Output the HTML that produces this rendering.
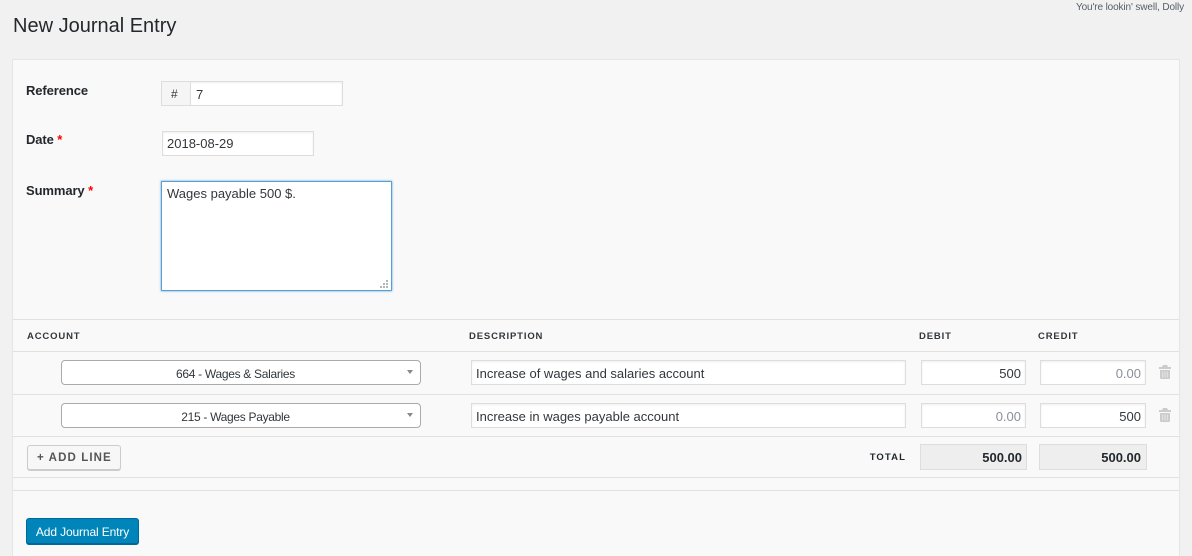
<!DOCTYPE html>
<html><head><meta charset="utf-8">
<style>
html,body{margin:0;padding:0;width:1192px;height:556px;overflow:hidden;background:#f1f1f1;font-family:"Liberation Sans",sans-serif;color:#32373c}
.a{position:absolute;box-sizing:border-box;white-space:nowrap}
.t{position:absolute;white-space:nowrap;font-size:13px;line-height:18px;color:#32373c}
.b{font-weight:bold;color:#23282d;font-size:13px;letter-spacing:-.1px}
.h{font-weight:bold;font-size:9.5px;letter-spacing:.85px;color:#32373c;line-height:12px}
.i{position:absolute;box-sizing:border-box;background:#fff;border:1px solid #ddd;box-shadow:inset 0 1px 2px rgba(0,0,0,.07)}
.l{position:absolute;left:13px;width:1166px;height:1px;background:#e1e1e1}
.s{position:absolute;box-sizing:border-box;background:#fff;border:1px solid #aaa;border-radius:4px;left:61px;width:360px;height:25px}
.c{position:absolute;width:0;height:0;border-left:3.500px solid transparent;border-right:3.500px solid transparent;border-top:4px solid #888;left:407px}
.r{text-align:right}
.tot{position:absolute;box-sizing:border-box;background:#eee;border:1px solid #ddd;top:444px;height:26px}
</style></head><body>
<div class="t" style="left:13px;top:13px;font-size:20px;line-height:26px;color:#23282d">New Journal Entry</div>
<div class="t" style="right:8px;top:1px;font-size:10px;line-height:14px;letter-spacing:-.12px;color:#555d66">You're lookin' swell, Dolly</div>

<div class="a" style="left:12px;top:59px;width:1168px;height:497px;background:#f9f9f9;border:1px solid #e5e5e5;border-bottom:0"></div>

<div class="t b" style="left:26px;top:82px">Reference</div>
<div class="i" style="left:161px;top:81px;width:182px;height:25px"></div>
<div class="a" style="left:161px;top:81px;width:30px;height:25px;background:#f5f5f5;border:1px solid #ddd"></div>
<div class="t" style="left:171px;top:85px;font-size:12px">#</div>
<div class="t" style="left:196px;top:86px">7</div>

<div class="t b" style="left:26px;top:131px">Date <span style="color:#f00">*</span></div>
<div class="i" style="left:162px;top:131px;width:152px;height:25px"></div>
<div class="t" style="left:167px;top:135px">2018-08-29</div>

<div class="t b" style="left:26px;top:182px">Summary <span style="color:#f00">*</span></div>
<div class="i" style="left:161px;top:181px;width:231px;height:110px;border-color:#5b9dd9;box-shadow:0 0 2px rgba(30,140,190,.8)"></div>
<div class="t" style="left:167px;top:185px">Wages payable 500 $.</div>
<svg class="a" style="left:380px;top:280px" width="9" height="9" fill="#b5b5b5"><rect x="6" y="0" width="2" height="2"/><rect x="3" y="3" width="2" height="2"/><rect x="6" y="3" width="2" height="2"/><rect x="0" y="6" width="2" height="2"/><rect x="3" y="6" width="2" height="2"/><rect x="6" y="6" width="2" height="2"/></svg>

<div class="l" style="top:319px"></div>
<div class="t h" style="left:27px;top:331px">ACCOUNT</div>
<div class="t h" style="left:469px;top:331px">DESCRIPTION</div>
<div class="t h" style="left:919px;top:331px">DEBIT</div>
<div class="t h" style="left:1038px;top:331px">CREDIT</div>
<div class="l" style="top:351px"></div>

<div class="s" style="top:360px"></div>
<div class="t" style="left:61px;width:349px;text-align:center;top:365px;font-size:12px;letter-spacing:-.3px">664 - Wages &amp; Salaries</div>
<div class="c" style="top:370px"></div>
<div class="i" style="left:471px;top:360px;width:435px;height:25px"></div>
<div class="t" style="left:476px;top:365px">Increase of wages and salaries account</div>
<div class="i" style="left:921px;top:360px;width:105px;height:25px"></div>
<div class="t r" style="left:921px;width:100px;top:365px">500</div>
<div class="i" style="left:1040px;top:360px;width:106px;height:25px"></div>
<div class="t r" style="left:1040px;width:101px;top:365px;color:#8a9099">0.00</div>
<svg class="a" style="left:1159px;top:365px" width="12" height="14" viewBox="0 0 12 14"><path fill="#ccc" d="M4 0h4l1 2h3v2H0V2h3zM1 5h10v8.200l-.8.8H1.800L1 13.200z"/><path fill="#e4e4e4" d="M3.200 6.500h1v6h-1zM5.500 6.500h1v6h-1zM7.800 6.500h1v6h-1z"/></svg>
<div class="l" style="top:394px"></div>

<div class="s" style="top:403px"></div>
<div class="t" style="left:61px;width:349px;text-align:center;top:408px;font-size:12px;letter-spacing:-.3px">215 - Wages Payable</div>
<div class="c" style="top:413px"></div>
<div class="i" style="left:471px;top:403px;width:435px;height:25px"></div>
<div class="t" style="left:476px;top:408px">Increase in wages payable account</div>
<div class="i" style="left:921px;top:403px;width:105px;height:25px"></div>
<div class="t r" style="left:921px;width:100px;top:408px;color:#8a9099">0.00</div>
<div class="i" style="left:1040px;top:403px;width:106px;height:25px"></div>
<div class="t r" style="left:1040px;width:101px;top:408px">500</div>
<svg class="a" style="left:1159px;top:408px" width="12" height="14" viewBox="0 0 12 14"><path fill="#ccc" d="M4 0h4l1 2h3v2H0V2h3zM1 5h10v8.200l-.8.8H1.800L1 13.200z"/><path fill="#e4e4e4" d="M3.200 6.500h1v6h-1zM5.500 6.500h1v6h-1zM7.800 6.500h1v6h-1z"/></svg>
<div class="l" style="top:436px"></div>

<div class="a" style="left:27px;top:445px;width:94px;height:25px;background:#f7f7f7;border:1px solid #ccc;border-radius:3px;box-shadow:0 1px 0 #ccc"></div>
<div class="t" style="left:37px;top:449px;font-weight:bold;font-size:11.5px;letter-spacing:1.1px;color:#555">+ ADD LINE</div>
<div class="t h" style="right:286px;top:452px;letter-spacing:1.1px;color:#23282d">TOTAL</div>
<div class="tot" style="left:920px;width:107px"></div>
<div class="t r" style="left:920px;width:102px;top:449px;font-weight:bold;font-size:13px;color:#23282d">500.00</div>
<div class="tot" style="left:1039px;width:108px"></div>
<div class="t r" style="left:1039px;width:102px;top:449px;font-weight:bold;font-size:13px;color:#23282d">500.00</div>
<div class="l" style="top:477px"></div>
<div class="l" style="top:490px"></div>

<div class="a" style="left:26px;top:518px;width:113px;height:26px;background:#0085ba;border:1px solid #006799;border-radius:3px;box-shadow:0 1px 0 #006799"></div>
<div class="t" style="left:26px;width:113px;text-align:center;top:523px;font-size:12px;letter-spacing:-.13px;color:#fff">Add Journal Entry</div>
</body></html>
